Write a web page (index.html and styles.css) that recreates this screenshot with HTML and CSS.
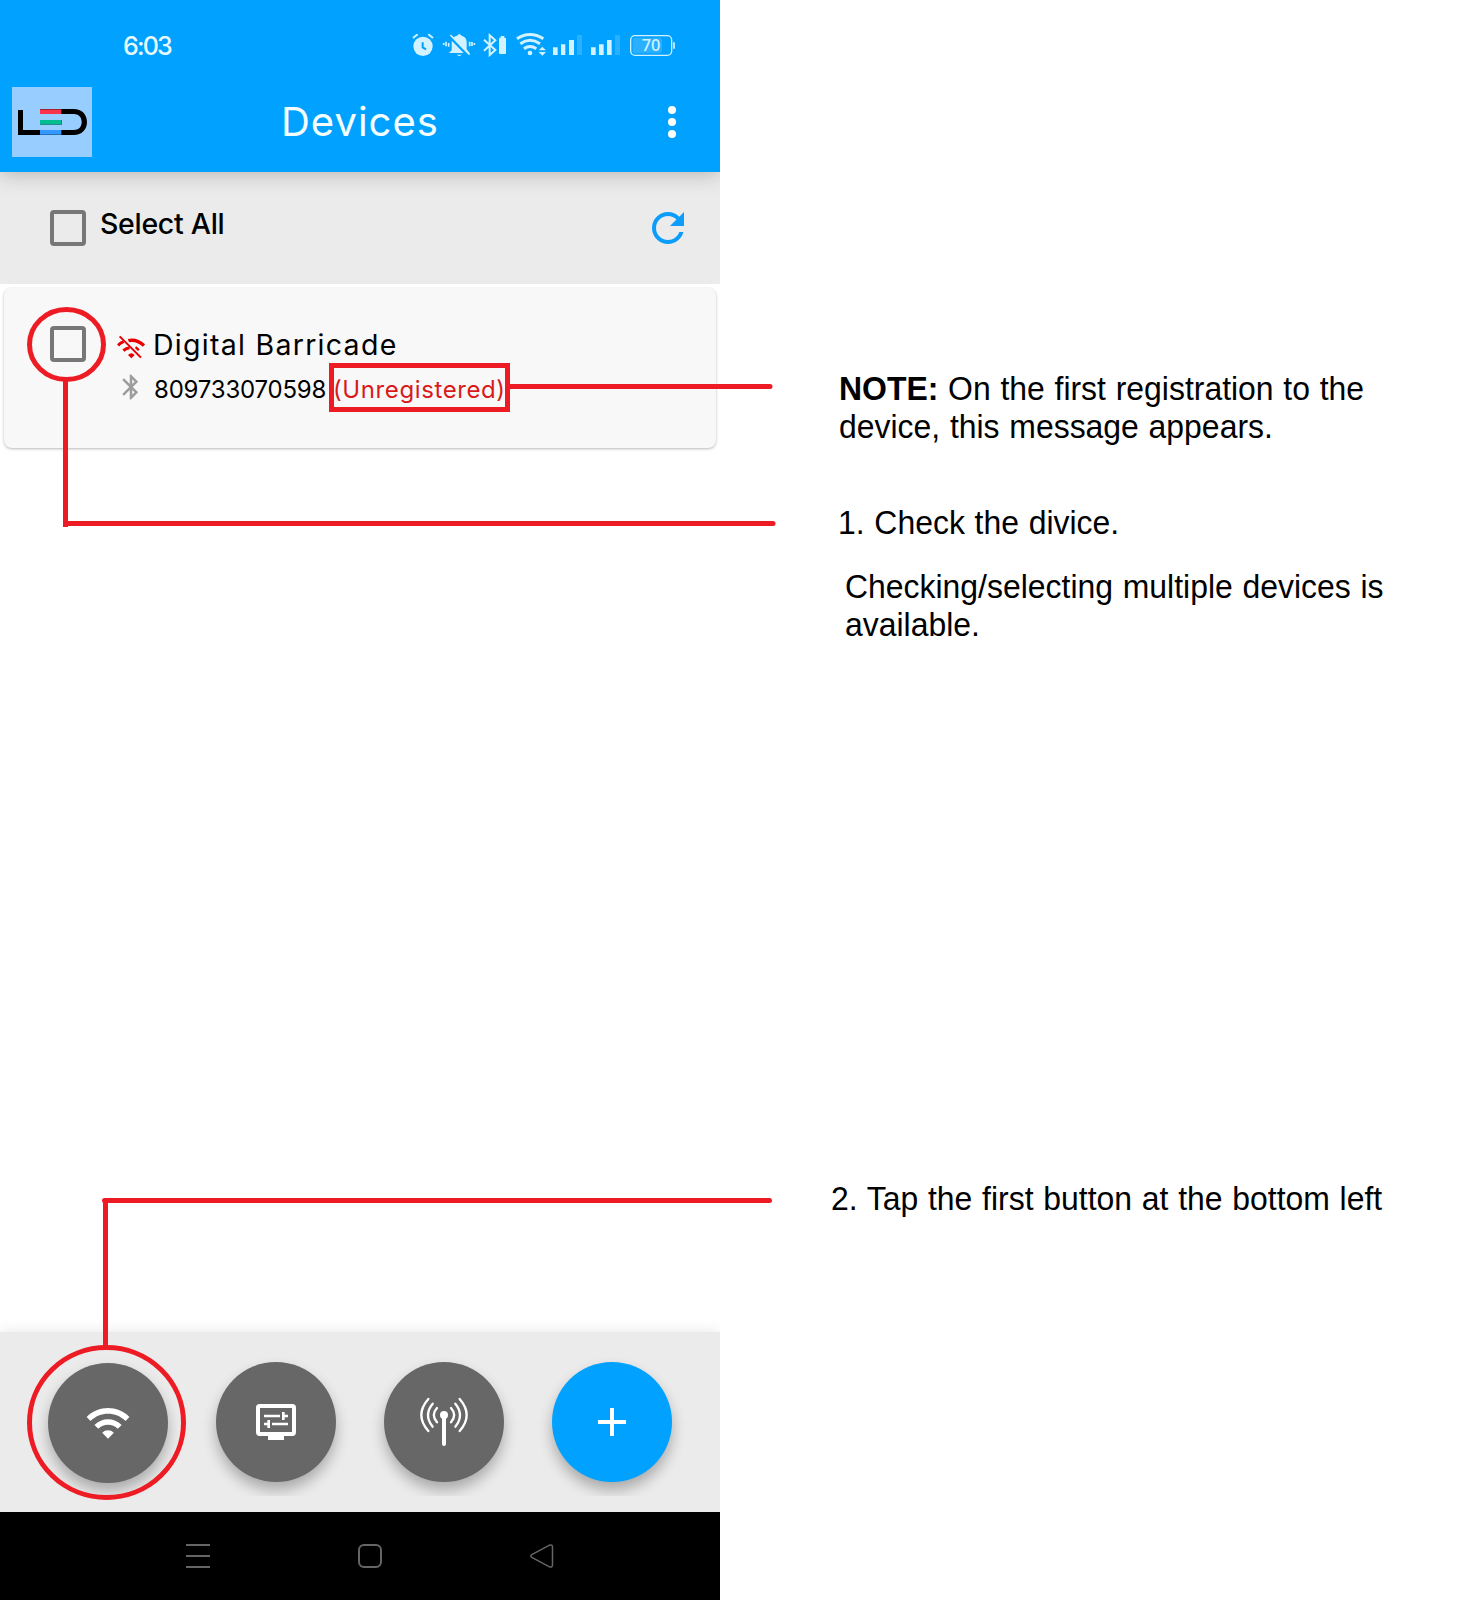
FILE: index.html
```html
<!DOCTYPE html>
<html lang="en">
<head>
<meta charset="utf-8">
<title>Devices</title>
<link rel="stylesheet" href="styles.css">
</head>
<body>
<main class="page">
  <section class="phone">
    <header class="header">
      <div class="status">
        <span class="clock">6:03</span>
        <svg class="status-icons" viewBox="0 0 870 150" fill="#d2f2ff" stroke="#d2f2ff">
          <g><circle cx="69" cy="79" r="29" stroke="none"/><path d="M39 54l14-11M99 54L85 43" fill="none" stroke-width="6"/><path d="M68 67v15l10 6" fill="none" stroke="#00a1ff" stroke-width="6"/></g>
          <g><path d="M155 91V67q0-17 16-20l7-6 7 6q15 4 15 20v21l9 11h-62z" stroke="none"/><path d="M170 104h16l-8 5z" stroke="none"/><path d="M146 47l60 62" stroke="#00a1ff" stroke-width="8"/><path d="M151 45l58 59M131 69v6M138 65v14M146 69v11M209 65v14M216 66v12M223 69v6" stroke-width="5"/></g>
          <g><path d="M252 59l34 31-17 15V46l17 15-34 31" fill="none" stroke-width="6"/><rect x="297" y="53" width="21" height="49" rx="3" stroke="none"/><rect x="302" y="48" width="11" height="7" stroke="none"/></g>
          <g fill="none" stroke-width="9"><path d="M351 56q39-25 79 0M361 71q29-20 59 0M372 86q18-13 37 0"/></g>
          <g stroke="none"><circle cx="390" cy="99" r="7"/><path d="M416 91l11-11 11 11zM416 96l11 11 11-11z"/>
          <path d="M459 82h14v23h-14zM483 73h13v32h-13zM507 60h15v45h-15zM573 82h14v23h-14zM597 73h14v32h-14zM621 60h14v45h-14z"/>
          <path d="M531 45h15v60h-15zM645 45h15v60h-15z" opacity=".2"/></g>
          <rect x="692" y="47" width="123" height="59" rx="13" fill="none" stroke-width="4"/><rect x="698" y="53" width="88" height="47" rx="8" stroke="none" opacity=".2"/><path d="M822 67v19" stroke-width="5"/>
          <text class="battery" x="725" y="93" stroke="none" textLength="56" lengthAdjust="spacingAndGlyphs">70</text>
        </svg>
      </div>
      <div class="appbar">
        <svg class="logo" viewBox="36 201 240 210">
          <path fill="#97cdff" d="M36 201h240v210H36z"/>
          <path d="M54 270h15v60h51v15H54zM183 267h38c24 0 40 16 40 39s-16 39-40 39h-38v-15h38c15 0 24-9 24-24s-9-24-24-24h-38z"/>
          <path fill="#f9344b" d="M120 267h64v15h-64z"/><path fill="#00bd91" d="M120 300h65v14h-65z"/><path fill="#3499ff" d="M120 330h64v15h-64z"/>
          <path d="M120 267h64v3h-64zM120 313h66v2h-66zM183 300h3v15h-3zM120 343h64v2h-64z" opacity=".35"/>
        </svg>
        <h1 class="title">Devices</h1>
        <svg class="more" viewBox="0 0 8 32" fill="#fff"><circle cx="4" cy="4" r="4"/><circle cx="4" cy="16" r="4"/><circle cx="4" cy="28" r="4"/></svg>
      </div>
    </header>
    <div class="select-bar">
      <span class="checkbox"></span>
      <span class="select-label">Select All</span>
      <svg class="refresh" viewBox="0 0 24 24" fill="#0b9dfb"><path d="M17.65 6.35C16.2 4.9 14.21 4 12 4c-4.42 0-7.99 3.58-7.99 8s3.57 8 7.99 8c3.73 0 6.84-2.55 7.73-6h-2.08c-.82 2.33-3.04 4-5.65 4-3.31 0-6-2.69-6-6s2.69-6 6-6c1.66 0 3.14.69 4.22 1.78L13 11h7V4l-2.35 2.35z"/></svg>
    </div>
    <article class="card">
      <span class="checkbox"></span>
      <div class="device">
        <div class="row name-row">
          <svg class="wifi-off" viewBox="350 134 84 78" fill="none" stroke="#e90000">
            <path d="M384 154q25-6 47 15" stroke-width="10"/><path d="M353 168q8-8 17-11M369 184q9-8 19-9M405 174l10 9" stroke-width="9"/>
            <path d="M383 197q10-10 20 0l-10 10z" fill="#e90000" stroke="none"/>
            <path d="M363 138l62 63" stroke="#f8f8f8" stroke-width="5"/><path d="M358 141l64 64" stroke-width="6"/>
          </svg>
          <span class="name">Digital Barricade</span>
        </div>
        <div class="row id-row">
          <svg class="bluetooth" viewBox="0 0 24 24" fill="#9d9d9d"><path d="M17.71 7.71L12 2h-1v7.59L6.41 5 5 6.41 10.59 12 5 17.59 6.41 19 11 14.41V22h1l5.71-5.71-4.3-4.29 4.3-4.29zM13 5.83l1.88 1.88L13 9.59V5.83zm1.88 10.46L13 18.17v-3.76l1.88 1.88z"/></svg>
          <span class="id">809733070598</span>
          <span class="unregistered">(Unregistered)</span>
        </div>
      </div>
    </article>
    <footer class="actions">
      <div class="fabs">
        <svg class="fab first" viewBox="0 0 120 120" fill="#fff"><path transform="translate(36.7 36.3) scale(1.945 1.97)" d="M1 9l2 2c4.97-4.97 13.03-4.97 18 0l2-2C16.93 2.93 7.08 2.93 1 9zm8 8l3 3 3-3c-1.65-1.66-4.34-1.66-6 0zm-4-4l2 2c2.76-2.76 7.24-2.76 10 0l2-2C15.14 9.14 8.87 9.14 5 13z"/></svg>
        <svg class="fab" viewBox="648 126 360 360" fill="#fff"><rect x="774" y="258" width="108" height="84" rx="5" fill="none" stroke="#fff" stroke-width="12"/><path d="M804 348h48v12h-48zM792 284h48v8h-48zM846 276h8v8h10v8h-10v8h-8zM792 308h10v-8h8v24h-8v-8h-10zM816 308h48v8h-48z"/></svg>
        <svg class="fab" viewBox="72 126 360 360" fill="none" stroke="#fff" stroke-linecap="round"><path d="M252 285v87" stroke-width="12"/><circle cx="252" cy="285" r="12" fill="#fff" stroke="none"/><path stroke-width="7" d="M231 264q-19 21 0 43M218 251q-28 34 0 69M205 237q-42 48 0 96M273 264q19 21 0 43M286 251q28 34 0 69M299 237q42 48 0 96"/></svg>
        <svg class="fab add" viewBox="576 126 360 360" fill="#fff"><path d="M750 264h12v36h36v12h-36v36h-12v-36h-36v-12h36z"/></svg>
      </div>
    </footer>
    <nav class="nav">
      <svg viewBox="0 0 24 24"><path d="M0 1h24M0 12h24M0 23h24"/></svg>
      <svg viewBox="0 0 24 24"><rect x="1" y="1" width="22" height="22" rx="5"/></svg>
      <svg viewBox="0 0 24 24"><path d="M1.8 10.7L19.5 1.2q3-1 3 2v17.6q0 3-3 2L1.8 13.3q-2-1.300 0-2.600z" stroke-width="1.500"/></svg>
    </nav>
  </section>
  <aside class="notes">
    <p class="note warning"><b>NOTE:</b> On the first registration to the<br>device, this message appears.</p>
    <p class="note step-one">1. Check the divice.</p>
    <p class="note detail">Checking/selecting multiple devices is<br>available.</p>
    <p class="note step-two">2. Tap the first button at the bottom left</p>
  </aside>
  <svg class="callouts" viewBox="0 0 800 1600" fill="none" stroke="#ed1c24" stroke-width="5">
    <ellipse cx="66.500" cy="344.500" rx="37" ry="35"/>
    <path d="M65.500 380v147"/><path d="M66 523.500H773" stroke-linecap="round"/>
    <path d="M331.500 365.500h176v44h-176z"/><path d="M510 386.500h260" stroke-linecap="round"/>
    <ellipse cx="106.500" cy="1422.500" rx="77" ry="75"/>
    <path d="M105.500 1346v-146"/><path d="M104.500 1200.500H769.500" stroke-linecap="round"/>
  </svg>
</main>
</body>
</html>
```
FILE: styles.css
```css
* { box-sizing: border-box; }
body { margin: 0; background: #fff; color: #000; font-family: Inter, sans-serif; }
svg { display: block; flex: none; }
.page { position: relative; display: flex; width: 1470px; height: 1600px; overflow: hidden; }
.phone { display: flex; flex-direction: column; width: 720px; height: 1600px; flex: none; }
.header { position: relative; height: 172px; background: #00a1ff; box-shadow: 0 2px 20px rgba(0,0,0,.24); clip-path: inset(0 0 -30px 0); flex: none; }
.status { display: flex; height: 70px; padding: 20px 30px 0 123px; justify-content: space-between; }
.clock { color: #e8fbff; font-size: 25px; font-weight: 500; line-height: 52px; letter-spacing: -1.8px; }
.status-icons { width: 290px; height: 50px; }
.battery { font: 500 48px "Noto Sans", sans-serif; }
.appbar { display: flex; align-items: center; height: 104px; padding: 0 44px 0 12px; }
.logo { width: 80px; height: 70px; }
.title { margin: 0 auto 0 189px; color: #f5feff; font-size: 40px; font-weight: 400; line-height: 48px; letter-spacing: 1px; }
.more { width: 8px; height: 32px; }
.select-bar { display: flex; height: 112px; padding: 32px 28px 0 50px; background: #ebebeb; }
.checkbox { width: 36px; height: 36px; border: 4px solid #777; border-radius: 4px; flex: none; }
.select-bar .checkbox { margin-top: 6px; }
.select-label { margin: 2px auto 0 14px; font-size: 28.500px; font-weight: 500; line-height: 36px; letter-spacing: -.3px; }
.refresh { width: 48px; height: 48px; }
.card { display: flex; width: 712px; height: 160px; margin: 4px 0 0 4px; padding: 38px 0 0 46px; background: #f8f8f8; border-radius: 8px; box-shadow: 0 1px 3px rgba(0,0,0,.28); flex: none; }
.device { display: flex; flex-direction: column; padding-left: 31px; }
.row { display: flex; align-items: flex-start; white-space: nowrap; }
.name-row { height: 46px; gap: 8px; }
.wifi-off { width: 28px; height: 26px; margin-top: 8px; }
.name { font-size: 28.500px; font-weight: 400; line-height: 38px; letter-spacing: 1.280px; }
.id-row { font-size: 24px; font-weight: 400; line-height: 36px; }
.bluetooth { width: 30px; height: 30px; margin-left: -1px; }
.id { width: 179px; margin-left: 8px; letter-spacing: -.2px; }
.unregistered { color: #d91a1c; letter-spacing: .6px; }
.actions { height: 180px; margin-top: auto; background: #ebebeb; box-shadow: 0 0 14px rgba(0,0,0,.1); clip-path: inset(-20px 0 0 0); flex: none; }
.fabs { display: flex; gap: 48px; height: 164px; padding: 30px 48px 0; overflow: hidden; }
.fab { width: 120px; height: 120px; border-radius: 50%; background: #676767; box-shadow: 0 8px 14px rgba(0,0,0,.28); }
.first { margin-top: 1px; }
.add { background: #00a1ff; }
.nav { display: flex; align-items: center; gap: 148px; height: 88px; padding-left: 186px; background: #000; flex: none; }
.nav svg { width: 24px; height: 24px; fill: none; stroke: #656565; stroke-width: 2; }
.notes { display: flex; flex-direction: column; padding: 370px 0 0 111px; font-family: "Liberation Sans", Arial, sans-serif; font-size: 33.330px; line-height: 38px; }
.note { margin: 0; white-space: nowrap; word-spacing: .900px; transform: scaleX(.958); transform-origin: left; align-self: flex-start; }
.warning { margin-left: 8px; }
.step-one { margin: 58px 0 0 7px; }
.detail { margin: 26px 0 0 14px; }
.step-two { margin-top: 536px; }
.callouts { position: absolute; left: 0; top: 0; width: 800px; height: 1600px; }
```
